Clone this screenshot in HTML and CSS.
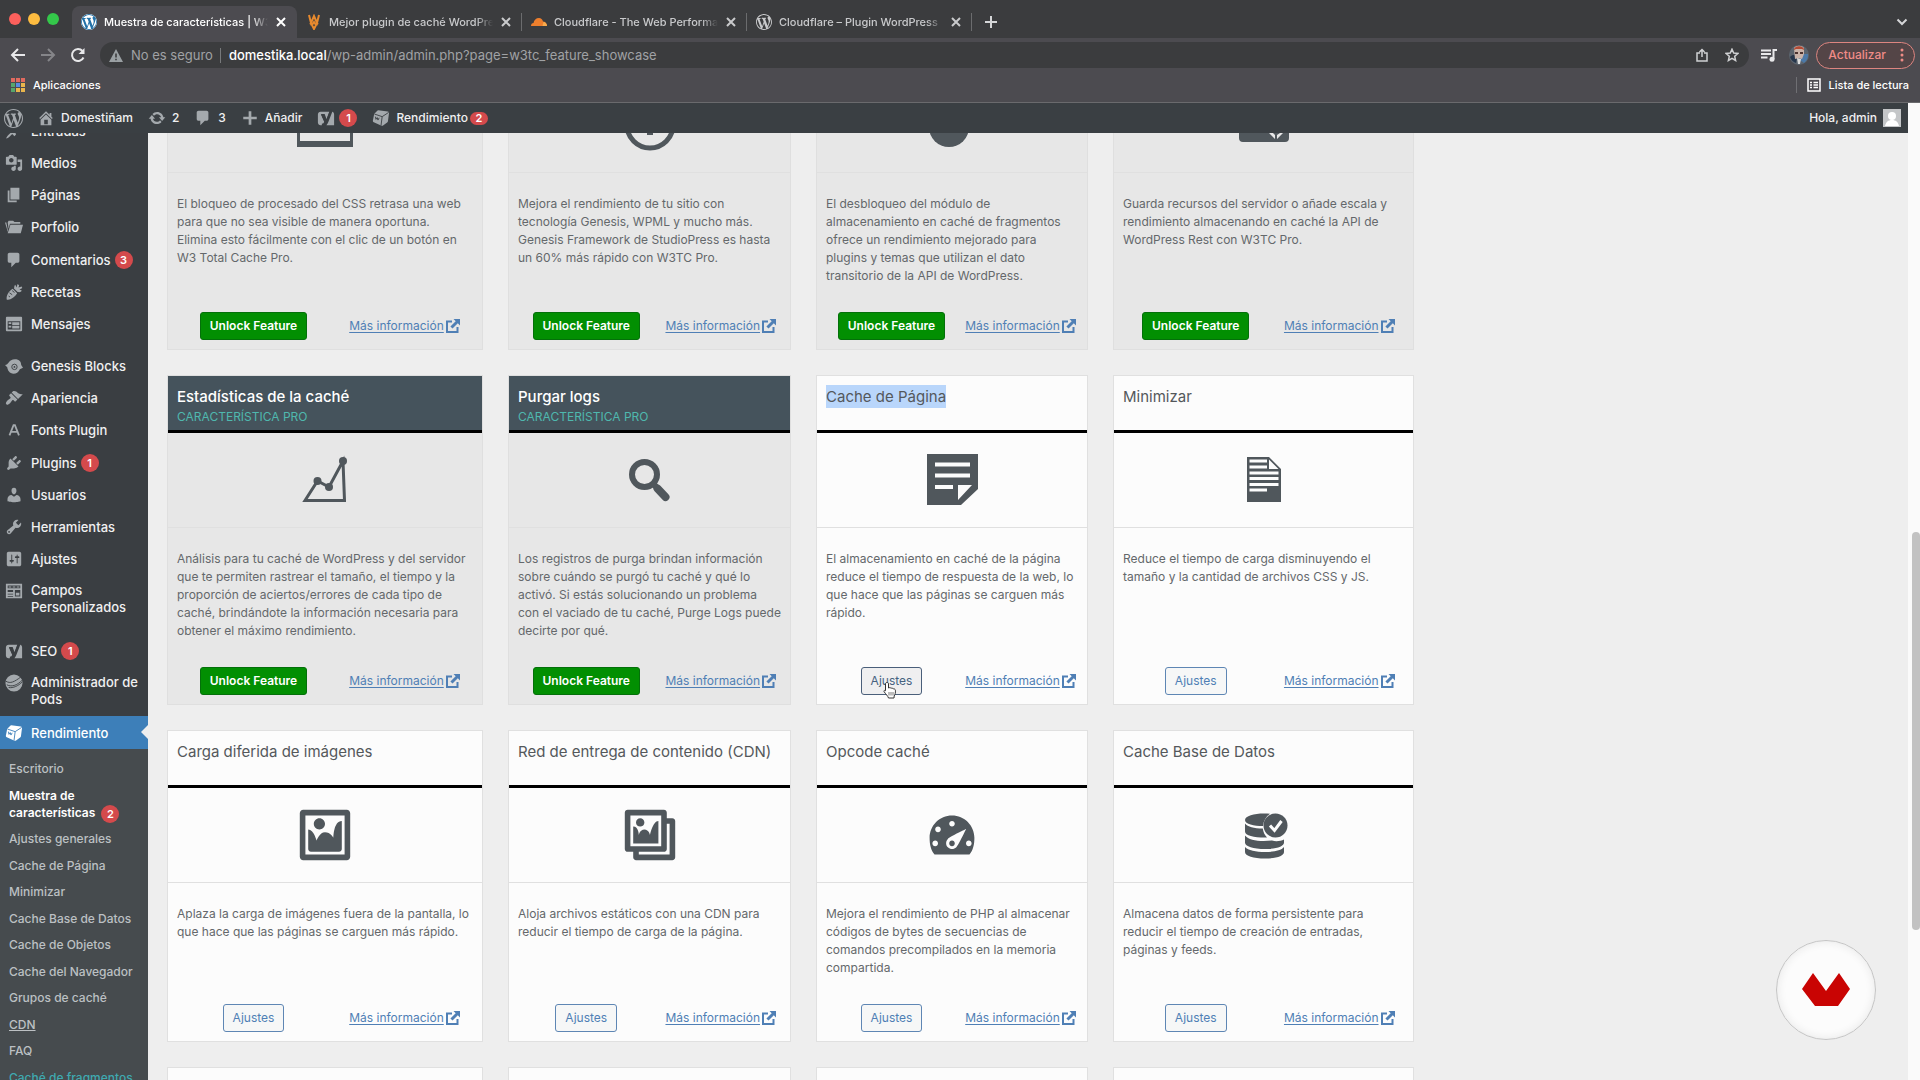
FILE: index.html
```html
<!DOCTYPE html>
<html lang="es">
<head>
<meta charset="utf-8">
<title>Muestra de características | W3 Total Cache</title>
<link rel="stylesheet" href="styles.css">
</head>
<body>
<svg class="sprite" aria-hidden="true">
  <symbol id="i-wp" viewBox="0 0 20 20"><path d="M20 10c0-5.51-4.49-10-10-10C4.48 0 0 4.49 0 10c0 5.52 4.48 10 10 10 5.51 0 10-4.48 10-10zM7.78 15.37L4.37 6.22c.55-.02 1.17-.08 1.17-.08.5-.06.44-1.13-.06-1.11 0 0-1.45.11-2.37.11-.18 0-.37 0-.58-.01C4.12 2.69 6.87 1.11 10 1.11c2.33 0 4.45.87 6.05 2.34-.68-.11-1.65.39-1.65 1.58 0 .74.45 1.36.9 2.1.35.61.55 1.36.55 2.46 0 1.49-1.4 5-1.4 5l-3.03-8.37c.54-.02.82-.17.82-.17.5-.05.44-1.25-.06-1.22 0 0-1.44.12-2.38.12-.87 0-2.33-.12-2.33-.12-.5-.03-.56 1.2-.06 1.22l.92.08 1.26 3.41zM17.41 10c.24-.64.74-1.87.43-4.25.7 1.29 1.05 2.71 1.05 4.25 0 3.29-1.73 6.24-4.4 7.78.97-2.59 1.94-5.2 2.92-7.78zM6.1 18.09C3.12 16.65 1.11 13.53 1.11 10c0-1.3.23-2.48.72-3.59C3.25 10.3 4.67 14.2 6.1 18.09zm4.03-6.63l2.58 6.98c-.86.29-1.76.45-2.71.45-.79 0-1.57-.11-2.29-.33.81-2.38 1.62-4.74 2.42-7.1z"/></symbol>
  <symbol id="i-home" viewBox="0 0 20 20"><path d="M16 8.5l1.53 1.53-1.06 1.06L10 4.6l-6.47 6.49-1.06-1.06L10 2.5l4 4v-2h2v4zm-6-2.46l6 5.99V18H4v-5.97zM12 17v-5H8v5h4z"/></symbol>
  <symbol id="i-update" viewBox="0 0 20 20"><path d="M10.2 3.28c3.53 0 6.43 2.61 6.92 6h2.08l-3.5 4-3.5-4h2.32c-.45-1.97-2.21-3.45-4.32-3.45-1.45 0-2.73.71-3.54 1.78L4.95 5.66C6.23 4.2 8.11 3.28 10.2 3.28zm-.4 13.44c-3.52 0-6.43-2.61-6.92-6H.8l3.5-4c1.17 1.33 2.33 2.67 3.5 4H5.48c.45 1.97 2.21 3.45 4.32 3.45 1.45 0 2.73-.71 3.54-1.78l1.71 1.95c-1.28 1.46-3.15 2.38-5.25 2.38z"/></symbol>
  <symbol id="i-comment" viewBox="0 0 20 20"><path d="M5 2h9c1.1 0 2 .9 2 2v7c0 1.1-.9 2-2 2h-2l-5 5v-5H5c-1.1 0-2-.9-2-2V4c0-1.1.9-2 2-2z"/></symbol>
  <symbol id="i-plus" viewBox="0 0 20 20"><path d="M8.5 2.500h3v6h6v3h-6v6h-3v-6h-6v-3h6z"/></symbol>
  <symbol id="i-yoast" viewBox="0 0 20 20"><path fill-rule="evenodd" d="M4 3h10l-3.300 8.500L8.500 5.500H4.300L8 14.300c-.4 1.500-1.200 2-2.600 2.100V18H4c-1.700 0-3-1.300-3-3V6c0-1.700 1.300-3 3-3zM17 3c1.200.3 2 1.500 2 3v12h-8.500c1-1.200 1.700-2.400 2.200-3.800z"/><path d="M5.500 6.500L9 14M15.500 0L10.300 14c-.9 2.700-2 4.200-4 4.500" fill="none" stroke="#3a3e42" stroke-width="1.500"/></symbol>
  <symbol id="i-cube" viewBox="0 0 20 20"><path d="M7 1.500l10.500 1.200c1 .1 1.500.8 1.400 1.700l-1.200 9.200c-.1.600-.4 1-.9 1.300l-4.500 3.400c-.5.400-1.100.5-1.700.2L2 14.600c-.8-.4-1.200-1-1-1.900L2.300 6c.1-.5.400-.9.800-1.200l2.500-2.600c.4-.5.800-.7 1.400-.7z"/><path d="M2.700 5.600L11.300 8.500l7.200-4.700M11.300 8.500L10 18.500M3.800 8.500l.6 3 1.400-2 .8 2.800L8 9.800" fill="none" stroke="var(--cube-line)" stroke-width="1"/></symbol>
  <symbol id="i-media" viewBox="0 0 20 20"><path d="M13 11V4c0-.55-.45-1-1-1h-1.670L9 1H5L3.670 3H2c-.55 0-1 .45-1 1v7c0 .55.45 1 1 1h10c.55 0 1-.45 1-1zM7 4.500c1.380 0 2.500 1.120 2.500 2.500S8.380 9.500 7 9.500 4.500 8.380 4.500 7 5.620 4.500 7 4.500zM14 6h5v10.500c0 1.380-1.120 2.500-2.500 2.500S14 17.880 14 16.500s1.120-2.500 2.500-2.500c.17 0 .34.02.5.05V9h-3V6zm-4 8.050V13h2v3.500c0 1.380-1.120 2.500-2.500 2.500S7 17.880 7 16.500 8.120 14 9.500 14c.17 0 .34.02.5.05z"/></symbol>
  <symbol id="i-page" viewBox="0 0 20 20"><path d="M6 15V2h10v13H6zm-1 1h8v2H3V5h2v11z"/></symbol>
  <symbol id="i-folder" viewBox="0 0 20 20"><path d="M0 5h1.500l2 10H3zM3 5l1-2h5l1.500 1.500H17V6.500H5.500L4 12z"/><path d="M6 7.500h14L17.500 17H3z"/></symbol>
  <symbol id="i-carrot" viewBox="0 0 20 20"><path d="M2 18.500C1 15 4 9 8.500 6.500l5 5C11 16 5.500 19.500 2 18.500zM10 6c.5-1 0-3 1.500-4l1.200 3L14 1l1.700 1.500L15 5l3.500-1 .7 1.500L16 7.500l2.500.5-.5 1.500c-1.500 1-3 .7-4 .5z"/><path d="M5 11l3 2M8 8.500l2.500 2M4 14.500l1.500 1" stroke="#3a3e42" stroke-width="1" fill="none"/></symbol>
  <symbol id="i-feedback" viewBox="0 0 20 20"><path d="M2 2h16c.55 0 1 .45 1 1v14c0 .55-.45 1-1 1H2c-.55 0-1-.45-1-1V3c0-.55.45-1 1-1zm15 14V7H3v9h14zM4 8v2h3V8H4zm4 0v3h8V8H8zm-4 4v2h3v-2H4zm4 0v3h8v-3H8z"/></symbol>
  <symbol id="i-genesis" viewBox="0 0 20 20"><path d="M0 9c4 0 4-6.500 11-6.500 5 0 7 3 7 6.500l2 3-3.500 1.500C15 17 12.500 18.500 9.500 18.500 5 18.500 3 15 2.500 11.500z"/><circle cx="10.500" cy="11" r="3" fill="none" stroke="#3a3e42" stroke-width="1"/><circle cx="10.500" cy="11" r="1" fill="#3a3e42"/></symbol>
  <symbol id="i-brush" viewBox="0 0 20 20"><path d="M14.480 11.060L7.410 3.990l1.500-1.500c.5-.56 2.300-.47 3.510.32 1.210.8 1.430 1.280 2.910 2.100 1.180.64 2.450 1.260 4.450.85zm-.71.71L6.700 4.700 4.930 6.470c-.39.39-.39 1.020 0 1.410l1.060 1.060c.39.39.39 1.030 0 1.420-.6.6-1.430 1.110-2.210 1.690-.35.26-.7.53-1.010.84C1.430 14.230.4 16.080 1.400 17.070c.99 1 2.840-.03 4.180-1.360.31-.31.58-.66.85-1.020.57-.78 1.080-1.610 1.690-2.210.39-.39 1.020-.39 1.410 0l1.060 1.060c.39.39 1.020.39 1.410 0z"/></symbol>
  <symbol id="i-fonts" viewBox="0 0 20 20"><path d="M5 16L9.500 4.500h1.500L15.500 16M6.800 12h7" fill="none" stroke="currentColor" stroke-width="2"/></symbol>
  <symbol id="i-plug" viewBox="0 0 20 20"><path d="M13.110 4.360L9.870 7.600 8 5.730l3.240-3.240c.35-.34 1.050-.2 1.560.32.52.51.66 1.210.31 1.550zm-8 1.770l.91-1.120 9.010 9.010-1.190.84c-.71.71-2.630 1.160-3.820 1.160H6.140L4.900 17.260c-.59.59-1.540.59-2.120 0-.59-.58-.59-1.530 0-2.120l1.240-1.240v-3.880c0-1.130.4-3.190 1.090-3.890zm7.260 3.970l3.240-3.240c.34-.35 1.040-.21 1.550.31.52.51.66 1.210.31 1.550l-3.240 3.250z"/></symbol>
  <symbol id="i-user" viewBox="0 0 20 20"><path d="M10 9.250c-2.270 0-2.730-3.440-2.730-3.440C7 4.020 7.820 2 9.970 2c2.160 0 2.980 2.020 2.710 3.810 0 0-.41 3.440-2.680 3.440zm0 2.570L12.720 10c2.390 0 4.520 2.330 4.520 4.530v2.490s-3.650 1.130-7.240 1.130c-3.650 0-7.240-1.130-7.240-1.130v-2.490c0-2.250 1.940-4.480 4.470-4.480z"/></symbol>
  <symbol id="i-wrench" viewBox="0 0 20 20"><path d="M16.680 9.770c-1.340 1.340-3.300 1.670-4.950.99l-5.410 6.520c-.99.99-2.590.99-3.580 0s-.99-2.590 0-3.570l6.520-5.420c-.68-1.650-.35-3.610.99-4.950 1.280-1.280 3.120-1.620 4.720-1.060l-2.890 2.890 2.820 2.820 2.860-2.870c.53 1.580.18 3.390-1.080 4.650zM3.810 16.210c.4.39 1.040.39 1.430 0 .4-.4.4-1.040 0-1.430-.39-.4-1.030-.4-1.430 0-.39.39-.39 1.030 0 1.430z"/></symbol>
  <symbol id="i-settings" viewBox="0 0 20 20"><path d="M18 16V4c0-1.100-.9-2-2-2H4c-1.100 0-2 .9-2 2v12c0 1.100.9 2 2 2h12c1.100 0 2-.9 2-2zM8 11h1c.55 0 1 .45 1 1s-.45 1-1 1H8v1.500c0 .28-.22.5-.5.5s-.5-.22-.5-.5V13H6c-.55 0-1-.45-1-1s.45-1 1-1h1V5.500c0-.28.22-.5.5-.5s.5.22.5.5V11zm5-2h-1c-.55 0-1-.45-1-1s.45-1 1-1h1V5.500c0-.28.22-.5.5-.5s.5.22.5.5V7h1c.55 0 1 .45 1 1s-.45 1-1 1h-1v5.500c0 .28-.22.5-.5.5s-.5-.22-.5-.5V9z"/></symbol>
  <symbol id="i-fields" viewBox="0 0 20 20"><path fill-rule="evenodd" d="M1 2h18v16H1zM3 4v3h14V4zM3 9v2h6V9zM3 13v1h6v-1zM3 15.500v1h6v-1zM11 9v7h6V9z"/><path d="M4 5h3v1H4zM8.500 5h3v1h-3zM13 5h3v1h-3zM12 12h4v3h-4z"/></symbol>
  <symbol id="i-pods" viewBox="0 0 20 20"><circle cx="10" cy="10" r="9.500"/><path d="M1 8c5 3 9 1 17-5M2 12c6 3 12 0 17-5M4 15c5 1 11-2 15-6" fill="none" stroke="#3a3e42" stroke-width="1"/></symbol>
  <symbol id="i-pin" viewBox="0 0 20 20"><path d="M10.440 3.020l1.820-1.820 6.360 6.350-1.830 1.820c-1.050-.68-2.480-.57-3.410.36l-.75.75c-.92.93-1.040 2.350-.35 3.410l-1.830 1.820-2.410-2.410-2.800 2.790c-.42.42-3.380 2.710-3.800 2.290s1.860-3.390 2.280-3.810l2.790-2.790L4.100 9.360l1.830-1.820c1.050.69 2.480.57 3.400-.36l.75-.75c.93-.92 1.050-2.350.36-3.410z"/></symbol>
  <symbol id="i-x" viewBox="0 0 12 12"><path d="M2 2l8 8M10 2l-8 8" fill="none" stroke="currentColor" stroke-width="2"/></symbol>
  <symbol id="i-ext" viewBox="0 0 14 14"><path d="M6 2.500H1v10.500h10.500V8" fill="none" stroke="currentColor" stroke-width="2"/><path d="M7.500 0H14v6.500l-2.200-2.200L6.500 9.600 4.400 7.500l5.300-5.300z"/></symbol>

  <symbol id="a-chart" viewBox="0 0 60 60"><path d="M10 50.500L22.500 31 34 37 48 11l1.500 39.500z" fill="none" stroke="currentColor" stroke-width="3"/><circle cx="22.500" cy="31" r="4"/><circle cx="34" cy="37" r="4"/><circle cx="48" cy="11" r="4"/></symbol>
  <symbol id="a-search" viewBox="0 0 60 60"><circle cx="24.500" cy="24.500" r="12.500" fill="none" stroke="currentColor" stroke-width="6"/><path d="M33.500 34l12 13" stroke="currentColor" stroke-width="6" stroke-linecap="round"/><path d="M37.500 38.500l8 8.500" stroke="currentColor" stroke-width="8" stroke-linecap="round"/></symbol>
  <symbol id="a-note" viewBox="0 0 60 60"><path fill-rule="evenodd" d="M5 4h51v35L39 55H5zM13 12.500v4h35v-4zM13 23.500v4h35v-4zM13 35v4h18v-4zM36 35v15l14-15z"/></symbol>
  <symbol id="a-doc" viewBox="0 0 60 60"><path fill-rule="evenodd" d="M13 7h22l12 12v33H13zM15.500 9.500v3H33v-3zM15.500 15.500v3H33v-3zM35 9.500v9.500h9.500zM15.500 21.500v3h29v-3zM15.500 27v3h29v-3zM15.500 33v3h29v-3zM15.500 38.500v3H33v-3z"/></symbol>
  <symbol id="a-image" viewBox="0 0 20 20"><path d="M2.250 1h15.500c.69 0 1.250.56 1.250 1.250v15.500c0 .69-.56 1.250-1.250 1.250H2.250C1.560 19 1 18.440 1 17.750V2.250C1 1.560 1.560 1 2.250 1zM17 17V3H3v14h14zM10 6c0-1.100-.9-2-2-2s-2 .9-2 2 .9 2 2 2 2-.9 2-2zm3 5s0-6 3-6v10c0 .55-.45 1-1 1H5c-.55 0-1-.45-1-1V8c2 0 3 4 3 4s1-3 3-3 3 2 3 2z"/></symbol>
  <symbol id="a-gallery" viewBox="0 0 20 20"><path d="M16 4h1.960c.57 0 1.040.47 1.040 1.040v12.920c0 .57-.47 1.040-1.040 1.040H5.040C4.470 19 4 18.530 4 17.960V16H2.040C1.470 16 1 15.530 1 14.960V2.040C1 1.470 1.470 1 2.040 1h12.920c.57 0 1.040.47 1.040 1.040V4zM3 14h11V3H3v11zm5-8.500C8 4.670 7.330 4 6.500 4S5 4.670 5 5.500 5.670 7 6.500 7 8 6.330 8 5.500zm2 4.500s1-5 3-5v8H4V7c2 0 2 3 2 3s.33-2 2-2 2 2 2 2zm7 7V6h-1v8.960c0 .57-.47 1.040-1.040 1.040H6v1h11z"/></symbol>
  <symbol id="a-gauge" viewBox="0 0 20 20"><path d="M3.760 17h12.480c1.340-1.630 1.760-3.730 1.760-6 0-4.420-3.580-8-8-8s-8 3.580-8 8c0 2.270.42 4.370 1.760 6zM9 6c0-.55.45-1 1-1s1 .45 1 1c0 .56-.45 1-1 1s-1-.44-1-1zM4 8c0-.55.45-1 1-1s1 .45 1 1c0 .56-.45 1-1 1s-1-.44-1-1zm4.520 3.400c.84-.83 6.510-3.500 6.510-3.500s-2.660 5.680-3.490 6.510c-.84.84-2.180.84-3.020 0-.83-.83-.83-2.180 0-3.010zM3 13c0-.55.45-1 1-1s1 .45 1 1c0 .56-.45 1-1 1s-1-.44-1-1zm6 0c0-.55.45-1 1-1s1 .45 1 1-.45 1-1 1-1-.44-1-1zm6 0c0-.55.45-1 1-1s1 .45 1 1c0 .56-.45 1-1 1s-1-.44-1-1z"/></symbol>
  <symbol id="a-database" viewBox="0 0 60 60"><path d="M30 8.500c-10 0-19 2.500-19 6.500s9 6 18 6c.5-5 3-9.500 7-12.200-2-.2-4-.3-6-.3z"/><path d="M11 18.500v8c0 4 9 6 20 6h2c-2.300-2.500-3.800-5.400-4.200-9-9 0-15-1.800-17.800-5zM11 30.500v7c0 4 8.500 6.500 20 6.500s19-2.500 19-6.500v-3c-3 1.500-8 2.300-12 1-12 1.300-23 0-27-5zM11 42v5c0 4 8.500 6.500 20 6.500S50 51 50 47v-5c-3 3.500-10 5-19 5s-17-1.500-20-5z"/><circle cx="41.500" cy="20.500" r="12"/><path d="M36 20.500l4.500 5 7-9.500" fill="none" stroke="#fcfcfc" stroke-width="3"/></symbol>
</svg>

<header class="browser">
  <div class="tabstrip">
    <div class="lights"><i class="light light--red"></i><i class="light light--yellow"></i><i class="light light--green"></i></div>
    <div class="tabs">
      <div class="tab tab--active"><svg class="tab__icon tab__icon--blue"><use href="#i-wp"/></svg><span class="tab__title">Muestra de características | W3</span><button class="tab__close" aria-label="Cerrar"><svg class="x"><use href="#i-x"/></svg></button></div>
      <div class="tab"><svg class="tab__icon" viewBox="0 0 16 16"><path d="M3 1l2 8 3-7 3 7 2-8M4 9l2 2 2-3 2 3 2-2M6 11l2 4 2-4" fill="none" stroke="#e88a2e" stroke-width="2"/></svg><span class="tab__title">Mejor plugin de caché WordPress</span><button class="tab__close" aria-label="Cerrar"><svg class="x"><use href="#i-x"/></svg></button></div>
      <div class="tab"><svg class="tab__icon" viewBox="0 0 16 16"><path d="M0 12c0-2 1-3 2.500-3C3 6 5 4 8 4c2 0 3.500 1.500 4 3.500 2 0 4 2 4 4.500z" fill="#ee7f2d"/><path d="M11.500 12l1-4c2 0 3.500 2 3.500 4z" fill="#f8ab4d"/></svg><span class="tab__title">Cloudflare - The Web Performance</span><button class="tab__close" aria-label="Cerrar"><svg class="x"><use href="#i-x"/></svg></button></div>
      <div class="tab"><svg class="tab__icon"><use href="#i-wp"/></svg><span class="tab__title">Cloudflare – Plugin WordPress</span><button class="tab__close" aria-label="Cerrar"><svg class="x"><use href="#i-x"/></svg></button></div>
    </div>
    <button class="newtab" aria-label="Nueva pestaña"><svg width="14" height="14" viewBox="0 0 14 14"><path d="M7 1v12M1 7h12" fill="none" stroke="currentColor" stroke-width="2"/></svg></button>
    <button class="tabmenu" aria-label="Buscar pestañas"><svg width="12" height="8" viewBox="0 0 12 8"><path d="M1.500 1.500L6 6l4.500-4.500" fill="none" stroke="currentColor" stroke-width="2"/></svg></button>
  </div>
  <div class="toolbar">
    <button class="nav" aria-label="Atrás"><svg width="16" height="16" viewBox="0 0 16 16"><path d="M15 8H2M8 2L2 8l6 6" fill="none" stroke="currentColor" stroke-width="2"/></svg></button>
    <button class="nav nav--off" aria-label="Adelante"><svg width="16" height="16" viewBox="0 0 16 16"><path d="M1 8h13M8 2l6 6-6 6" fill="none" stroke="currentColor" stroke-width="2"/></svg></button>
    <button class="nav" aria-label="Recargar"><svg width="16" height="16" viewBox="0 0 16 16"><path d="M13.500 10.500A6 6 0 1 1 12.500 4" fill="none" stroke="currentColor" stroke-width="2"/><path d="M14.500 1v6h-6z" fill="currentColor"/></svg></button>
    <div class="address">
      <svg width="14" height="13" viewBox="0 0 14 13"><path fill-rule="evenodd" fill="#9aa0a3" d="M7 0l7 13H0zM6.200 4.500v4h1.600v-4zM6.200 9.700v1.600h1.600V9.700z"/></svg>
      <span class="address__warn">No es seguro</span>
      <span class="address__url"><b class="address__host">domestika.local</b>/wp-admin/admin.php?page=w3tc_feature_showcase</span>
      <button class="address__btn" aria-label="Compartir"><svg width="12" height="14" viewBox="0 0 12 14"><path d="M4 5H1v8h10V5H8M6 9V1.500M3.500 4L6 1.500 8.500 4" fill="none" stroke="currentColor" stroke-width="1.500"/></svg></button>
      <button class="address__btn" aria-label="Favorito"><svg width="14" height="14" viewBox="0 0 14 14"><path d="M7 1.200l1.700 3.900 4.200.4-3.200 2.800.9 4.200L7 10.300l-3.600 2.200.9-4.200L1.100 5.500l4.200-.4z" fill="none" stroke="currentColor" stroke-width="1.500"/></svg></button>
    </div>
    <button class="ext" aria-label="Reproducción"><svg width="16" height="13" viewBox="0 0 16 13"><path d="M0 1.500h10M0 5h10M0 8.500h6.500M12.500 10V1h3.500" fill="none" stroke="currentColor" stroke-width="2"/><circle cx="11" cy="10.300" r="2.500" fill="currentColor"/></svg></button>
    <svg class="profile" viewBox="0 0 20 20"><circle cx="10" cy="10" r="10" fill="#5b646e"/><path d="M12 9h7a10 10 0 0 1-4 9l-4-3z" fill="#4b79a8"/><path d="M1 12c3-3 5-2 7 0l-1 6c-3-1-5-3-6-6z" fill="#26364c"/><path d="M5 3c2-3 8-3 10 0v6l-2 5-3-1-4 1z" fill="#c9b3a9"/><path d="M5 5c0-5 10-5 10 0l-2-1H7z" fill="#b34a35"/><path d="M6 7h3v2H6zM11 7h3v2h-3z" fill="#4c3330"/><path d="M8 13l4 1-1 5H9z" fill="#ddd"/></svg>
    <button class="updatebtn">Actualizar<svg width="4" height="14" viewBox="0 0 4 14"><circle cx="2" cy="2" r="1.500"/><circle cx="2" cy="7" r="1.500"/><circle cx="2" cy="12" r="1.500"/></svg></button>
  </div>
  <div class="bookmarks">
    <a class="bookmark" href="#"><svg width="14" height="14" viewBox="0 0 14 14"><path d="M0 0h4v4H0zM5 0h4v4H5zM10 0h4v4h-4z" fill="#e06a5f"/><path d="M0 5h4v4H0zM0 10h4v4H0z" fill="#57a56b"/><path d="M5 5h4v4H5z" fill="#5a8be0"/><path d="M10 5h4v4h-4zM5 10h4v4H5zM10 10h4v4h-4z" fill="#e9b54c"/></svg>Aplicaciones</a>
    <a class="bookmark bookmark--list" href="#"><svg width="14" height="14" viewBox="0 0 14 14"><path d="M1 1h12v12H1zM3 4.500h2M6.500 4.500H11M3 7h2M6.500 7H11M3 9.500h2M6.500 9.500H11" fill="none" stroke="currentColor" stroke-width="1.500"/></svg>Lista de lectura</a>
  </div>
</header>

<div class="page">
  <div class="site">
    <nav class="adminbar">
      <a class="ab ab--logo" href="#" aria-label="WordPress"><svg class="ic ic--20"><use href="#i-wp"/></svg></a>
      <a class="ab" href="#"><svg class="ic"><use href="#i-home"/></svg>Domestiñam</a>
      <a class="ab" href="#"><svg class="ic"><use href="#i-update"/></svg>2</a>
      <a class="ab" href="#"><svg class="ic"><use href="#i-comment"/></svg>3</a>
      <a class="ab" href="#"><svg class="ic"><use href="#i-plus"/></svg>Añadir</a>
      <a class="ab" href="#"><svg class="ic"><use href="#i-yoast"/></svg><span class="badge">1</span></a>
      <a class="ab" href="#"><svg class="ic"><use href="#i-cube"/></svg>Rendimiento<span class="badge badge--flat">2</span></a>
      <a class="ab ab--user" href="#">Hola, admin<svg class="avatar" viewBox="0 0 18 18"><path d="M0 0h18v18H0z" fill="#c4c6c8"/><circle cx="9" cy="7" r="4" fill="#fff"/><path d="M2 17c1-4 3-6 7-6s6 2 7 6z" fill="#fff"/></svg></a>
    </nav>
    <div class="body">
      <aside class="sidebar">
        <ul class="menu">
          <li class="menu__cut"><a class="mi" href="#"><svg class="ic"><use href="#i-pin"/></svg>Entradas</a></li>
          <li><a class="mi" href="#"><svg class="ic"><use href="#i-media"/></svg>Medios</a></li>
          <li><a class="mi" href="#"><svg class="ic"><use href="#i-page"/></svg>Páginas</a></li>
          <li><a class="mi" href="#"><svg class="ic"><use href="#i-folder"/></svg>Porfolio</a></li>
          <li><a class="mi mi--badged" href="#"><svg class="ic"><use href="#i-comment"/></svg>Comentarios<span class="badge">3</span></a></li>
          <li><a class="mi" href="#"><svg class="ic"><use href="#i-carrot"/></svg>Recetas</a></li>
          <li><a class="mi" href="#"><svg class="ic"><use href="#i-feedback"/></svg>Mensajes</a></li>
          <li class="menu__group"><a class="mi" href="#"><svg class="ic"><use href="#i-genesis"/></svg>Genesis Blocks</a></li>
          <li><a class="mi" href="#"><svg class="ic"><use href="#i-brush"/></svg>Apariencia</a></li>
          <li><a class="mi" href="#"><svg class="ic"><use href="#i-fonts"/></svg>Fonts Plugin</a></li>
          <li><a class="mi mi--badged" href="#"><svg class="ic"><use href="#i-plug"/></svg>Plugins<span class="badge">1</span></a></li>
          <li><a class="mi" href="#"><svg class="ic"><use href="#i-user"/></svg>Usuarios</a></li>
          <li><a class="mi" href="#"><svg class="ic"><use href="#i-wrench"/></svg>Herramientas</a></li>
          <li><a class="mi" href="#"><svg class="ic"><use href="#i-settings"/></svg>Ajustes</a></li>
          <li><a class="mi mi--two" href="#"><svg class="ic"><use href="#i-fields"/></svg><span>Campos<br>Personalizados</span></a></li>
          <li class="menu__group"><a class="mi mi--badged" href="#"><svg class="ic"><use href="#i-yoast"/></svg>SEO<span class="badge">1</span></a></li>
          <li><a class="mi mi--two" href="#"><svg class="ic"><use href="#i-pods"/></svg><span>Administrador de<br>Pods</span></a></li>
          <li><a class="mi mi--current" href="#"><svg class="ic"><use href="#i-cube"/></svg>Rendimiento</a></li>
        </ul>
        <ul class="submenu">
          <li><a class="sub" href="#">Escritorio</a></li>
          <li><a class="sub sub--current" href="#">Muestra de<br>características<span class="badge">2</span></a></li>
          <li><a class="sub" href="#">Ajustes generales</a></li>
          <li><a class="sub" href="#">Cache de Página</a></li>
          <li><a class="sub" href="#">Minimizar</a></li>
          <li><a class="sub" href="#">Cache Base de Datos</a></li>
          <li><a class="sub" href="#">Cache de Objetos</a></li>
          <li><a class="sub" href="#">Cache del Navegador</a></li>
          <li><a class="sub" href="#">Grupos de caché</a></li>
          <li><a class="sub sub--underline" href="#">CDN</a></li>
          <li><a class="sub" href="#">FAQ</a></li>
          <li><a class="sub sub--pro" href="#">Caché de fragmentos</a></li>
        </ul>
      </aside>
      <main class="content">
        <div class="cards">
          <article class="card card--pro card--cut">
            <div class="art"><svg class="art__cut" viewBox="0 0 60 28"><path d="M2 0v14h56V0h-3v8H5V0z"/></svg></div>
            <p class="card__text">El bloqueo de procesado del CSS retrasa una web para que no sea visible de manera oportuna. Elimina&nbsp;esto fácilmente con el clic de un botón en W3&nbsp;Total Cache Pro.</p>
            <footer class="card__foot"><button class="btn btn--unlock">Unlock Feature</button><a class="more" href="#"><span>Más información</span><svg class="more__ic"><use href="#i-ext"/></svg></a></footer>
          </article>
          <article class="card card--pro card--cut">
            <div class="art"><svg class="art__cut" viewBox="0 0 60 28"><path d="M7 -8a23 23 0 0 0 46 0" fill="none" stroke="currentColor" stroke-width="5"/><path d="M27 -4h6v6h-6z"/></svg></div>
            <p class="card__text">Mejora el rendimiento de tu sitio con tecnología Genesis, WPML y mucho más. Genesis Framework de StudioPress es hasta un 60% más rápido con W3TC Pro.</p>
            <footer class="card__foot"><button class="btn btn--unlock">Unlock Feature</button><a class="more" href="#"><span>Más información</span><svg class="more__ic"><use href="#i-ext"/></svg></a></footer>
          </article>
          <article class="card card--pro card--cut">
            <div class="art"><svg class="art__cut" viewBox="0 0 60 28"><circle cx="27" cy="-6" r="20"/></svg></div>
            <p class="card__text">El desbloqueo del módulo de almacenamiento en caché de fragmentos ofrece un rendimiento mejorado para plugins y temas que utilizan el dato transitorio de la API de WordPress.</p>
            <footer class="card__foot"><button class="btn btn--unlock">Unlock Feature</button><a class="more" href="#"><span>Más información</span><svg class="more__ic"><use href="#i-ext"/></svg></a></footer>
          </article>
          <article class="card card--pro card--cut">
            <div class="art"><svg class="art__cut" viewBox="0 0 60 28"><path fill-rule="evenodd" d="M5 0h50v5a4 4 0 0 1-4 4H9a4 4 0 0 1-4-4zM35 0l6 6V2l-2-2zM43 6l6-6h-3l-3 2z"/></svg></div>
            <p class="card__text">Guarda recursos del servidor o añade escala y rendimiento almacenando en caché la API de WordPress Rest con W3TC Pro.</p>
            <footer class="card__foot"><button class="btn btn--unlock">Unlock Feature</button><a class="more" href="#"><span>Más información</span><svg class="more__ic"><use href="#i-ext"/></svg></a></footer>
          </article>

          <article class="card card--pro">
            <header class="card__head"><h3 class="card__title">Estadísticas de la caché</h3><p class="card__tag">CARACTERÍSTICA PRO</p></header>
            <div class="art"><svg class="art__ic"><use href="#a-chart"/></svg></div>
            <p class="card__text">Análisis para tu caché de WordPress y del servidor que te permiten rastrear el tamaño, el tiempo y la proporción de aciertos/errores de cada tipo de caché, brindándote la información necesaria para obtener el máximo rendimiento.</p>
            <footer class="card__foot"><button class="btn btn--unlock">Unlock Feature</button><a class="more" href="#"><span>Más información</span><svg class="more__ic"><use href="#i-ext"/></svg></a></footer>
          </article>
          <article class="card card--pro">
            <header class="card__head"><h3 class="card__title">Purgar logs</h3><p class="card__tag">CARACTERÍSTICA PRO</p></header>
            <div class="art"><svg class="art__ic"><use href="#a-search"/></svg></div>
            <p class="card__text">Los registros de purga brindan información sobre cuándo se purgó tu caché y qué lo activó. Si estás solucionando un problema con&nbsp;el vaciado de tu caché, Purge Logs puede decirte por qué.</p>
            <footer class="card__foot"><button class="btn btn--unlock">Unlock Feature</button><a class="more" href="#"><span>Más información</span><svg class="more__ic"><use href="#i-ext"/></svg></a></footer>
          </article>
          <article class="card">
            <header class="card__head"><h3 class="card__title"><mark class="selected">Cache de Página</mark></h3></header>
            <div class="art"><svg class="art__ic"><use href="#a-note"/></svg></div>
            <p class="card__text">El almacenamiento en caché de la página reduce el tiempo de respuesta de la web, lo que hace que las páginas se carguen más rápido.</p>
            <footer class="card__foot"><button class="btn btn--hover">Ajustes<svg class="cursor" viewBox="0 0 14 18"><path d="M4 1.500c1 0 1.500.5 1.500 1.500v4c1-.6 2-.4 2.500.3.900-.4 1.800-.1 2.200.6 1-.3 2 .2 2.200 1.300.2 2.500-.2 4-1.200 5.800L11 17H5.500c-.5-2-3-4-4.500-6.500-.3-1 .8-1.500 1.500-.8V3c0-1 .5-1.500 1.500-1.500z" fill="#fff" stroke="#333" stroke-width="1"/><path d="M6 11v3.500M8 11v3.500M10 11v3.500" stroke="#777" stroke-width="1"/></svg></button><a class="more" href="#"><span>Más información</span><svg class="more__ic"><use href="#i-ext"/></svg></a></footer>
          </article>
          <article class="card">
            <header class="card__head"><h3 class="card__title">Minimizar</h3></header>
            <div class="art"><svg class="art__ic"><use href="#a-doc"/></svg></div>
            <p class="card__text">Reduce el tiempo de carga disminuyendo el tamaño y la cantidad de archivos CSS y JS.</p>
            <footer class="card__foot"><button class="btn">Ajustes</button><a class="more" href="#"><span>Más información</span><svg class="more__ic"><use href="#i-ext"/></svg></a></footer>
          </article>

          <article class="card">
            <header class="card__head"><h3 class="card__title">Carga diferida de imágenes</h3></header>
            <div class="art"><svg class="art__ic art__ic--dash"><use href="#a-image"/></svg></div>
            <p class="card__text">Aplaza la carga de imágenes fuera de la pantalla, lo que hace que las páginas se carguen más rápido.</p>
            <footer class="card__foot"><button class="btn">Ajustes</button><a class="more" href="#"><span>Más información</span><svg class="more__ic"><use href="#i-ext"/></svg></a></footer>
          </article>
          <article class="card">
            <header class="card__head"><h3 class="card__title">Red de entrega de contenido (CDN)</h3></header>
            <div class="art"><svg class="art__ic art__ic--dash"><use href="#a-gallery"/></svg></div>
            <p class="card__text">Aloja archivos estáticos con una CDN para reducir el tiempo de carga de la página.</p>
            <footer class="card__foot"><button class="btn">Ajustes</button><a class="more" href="#"><span>Más información</span><svg class="more__ic"><use href="#i-ext"/></svg></a></footer>
          </article>
          <article class="card">
            <header class="card__head"><h3 class="card__title">Opcode caché</h3></header>
            <div class="art"><svg class="art__ic art__ic--dash"><use href="#a-gauge"/></svg></div>
            <p class="card__text">Mejora el rendimiento de PHP al almacenar códigos de bytes de secuencias de comandos precompilados en la memoria compartida.</p>
            <footer class="card__foot"><button class="btn">Ajustes</button><a class="more" href="#"><span>Más información</span><svg class="more__ic"><use href="#i-ext"/></svg></a></footer>
          </article>
          <article class="card">
            <header class="card__head"><h3 class="card__title">Cache Base de Datos</h3></header>
            <div class="art"><svg class="art__ic"><use href="#a-database"/></svg></div>
            <p class="card__text">Almacena datos de forma persistente para reducir el tiempo de creación de entradas, páginas y feeds.</p>
            <footer class="card__foot"><button class="btn">Ajustes</button><a class="more" href="#"><span>Más información</span><svg class="more__ic"><use href="#i-ext"/></svg></a></footer>
          </article>

          <article class="card card--stub"></article>
          <article class="card card--stub"></article>
          <article class="card card--stub"></article>
          <article class="card card--stub"></article>
        </div>
      </main>
    </div>
  </div>
  <div class="scroll"><div class="scroll__thumb"></div></div>
</div>
<div class="brand"><svg width="48" height="34" viewBox="0 0 48 34"><path d="M11 0l13 18L37 0l11 16-12 17H13L0 16z" fill="#c90403"/></svg></div>
</body>
</html>
```

FILE: styles.css
```css
* { box-sizing: border-box; }
body {
  margin: 0;
  height: 100vh;
  overflow: hidden;
  display: flex;
  flex-direction: column;
  background: #eeeeee;
  color: #64686b;
  font: 12px/18px Inter, "Liberation Sans", sans-serif;
}
ul, h3, p { margin: 0; padding: 0; list-style: none; }
a { color: inherit; text-decoration: none; }
button { margin: 0; padding: 0; border: 0; background: none; color: inherit; font: inherit; }
svg { display: block; flex: none; fill: currentColor; }
.sprite { display: none; }

/* Browser window */
.browser { flex: none; background: #4c4b50; color: #e8e8ea; font-size: 11px; font-weight: 500; border-bottom: 1px solid #6a6a6d; }
.tabstrip { display: flex; align-items: center; height: 38px; background: #3b3c3e; }
.lights { display: flex; gap: 7px; padding-left: 9px; width: 72px; }
.light { width: 12px; height: 12px; border-radius: 6px; }
.light--red { background: #fc605c; }
.light--yellow { background: #fdbc40; }
.light--green { background: #34c84a; }
.tabs { display: flex; align-self: flex-end; }
.tab { display: flex; align-items: center; width: 225px; height: 32px; padding: 0 10px 0 9px; color: #c9cacc; position: relative; }
.tab::after { content: ""; position: absolute; right: 0; top: 7px; height: 18px; width: 1px; background: #6b6c6e; }
.tab--active { background: #4c4b50; color: #fff; border-radius: 8px 8px 0 0; }
.tab--active::after { display: none; }
.tab__icon { width: 16px; height: 16px; margin-right: 7px; }
.tab__icon--blue { color: #2271a8; background: #fff; border-radius: 8px; }
.tab__title { flex: 1; overflow: hidden; white-space: nowrap; -webkit-mask-image: linear-gradient(90deg, #000 90%, transparent); mask-image: linear-gradient(90deg, #000 90%, transparent); }
.tab__close { margin-left: 7px; }
.x { width: 12px; height: 12px; }
.newtab { margin: 6px 0 0 12px; color: #d5d6d8; }
.tabmenu { margin: 6px 12px 0 auto; color: #d5d6d8; }
.toolbar { display: flex; align-items: center; height: 34px; padding: 0 5px 0 10px; }
.nav { margin-right: 14px; }
.nav--off { color: #858589; }
.address { flex: 1; display: flex; align-items: center; height: 26px; padding: 0 10px 0 9px; border-radius: 13px; background: #3b3c3e; color: #a0a2a5; font-size: 13px; font-weight: 400; }
.address__warn { margin: 0 8px; padding-right: 7px; border-right: 1px solid #77797b; line-height: 15px; }
.address__url { flex: 1; }
.address__host { color: #fff; font-weight: 500; }
.address__btn { margin-left: 17px; color: #d0d1d3; }
.ext { margin-left: 12px; }
.profile { width: 20px; height: 20px; margin: 0 7px 0 12px; }
.updatebtn { display: flex; align-items: center; gap: 14px; height: 27px; padding: 0 10px 0 11px; border: 1px solid #dd8580; border-radius: 14px; color: #f08c87; background: #544547; font-size: 12px; }
.bookmarks { display: flex; justify-content: space-between; align-items: center; height: 30px; padding: 0 11px 4px; color: #fff; }
.bookmark { display: flex; align-items: center; gap: 8px; line-height: 16px; }
.bookmark--list { padding-left: 10px; border-left: 1px solid #6f6f73; }

/* Page frame */
.page { flex: 1; min-height: 0; display: flex; }
.site { flex: 1; min-width: 0; display: flex; flex-direction: column; }
.scroll { width: 12px; padding: 429px 0 0 4px; background: #fafafa; }
.scroll__thumb { height: 398px; border-radius: 4px; background: #c2c2c2; }

.ic { width: 18px; height: 18px; color: #a4a9ad; --cube-line: #3a3e42; }
.badge { display: inline-flex; align-items: center; justify-content: center; width: 18px; height: 18px; border-radius: 9px; background: #d44a4c; color: #fff; font-size: 11px; line-height: 18px; font-weight: 600; }

.adminbar { flex: none; display: flex; align-items: center; height: 30px; padding: 0 7px 0 4px; background: #3a3f43; color: #f0f0f1; font-size: 12px; font-weight: 500; }
.ab { display: flex; align-items: center; gap: 6px; margin-right: 15px; }
.ab .badge { margin-left: -2px; }
.ab .badge--flat { height: 13px; margin-left: -4px; }
.ab--logo { margin-right: 14px; }
.ic--20 { width: 19px; height: 19px; }
.ab--user { margin: 0 0 0 auto; }
.avatar { width: 18px; height: 18px; }

.body { flex: 1; min-height: 0; display: flex; overflow: hidden; }
.sidebar { flex: none; width: 148px; background: #3a3e42; color: #f0f0f1; font-size: 13px; font-weight: 500; }
.mi { display: flex; align-items: center; gap: 8px; height: 32px; padding-left: 5px; line-height: 18px; white-space: nowrap; }
.mi--badged { height: 33px; }
.mi .badge { margin-left: -4px; }
.mi--two { height: 49px; align-items: flex-start; padding-top: 7px; line-height: 17px; }
.mi--current { position: relative; height: 33px; background: #3d7fb9; color: #fff; }
.mi--current .ic { color: #fff; --cube-line: #3d7fb9; }
.mi--current::after { content: ""; position: absolute; right: 0; top: 9px; border: 7px solid transparent; border-left: 0; border-right-color: #eee; }
.menu__cut { display: flex; align-items: flex-end; height: 14px; overflow: hidden; }
.menu__group { margin-top: 10px; }
.submenu { padding: 7px 0; background: #464b4e; color: #bcc0c3; font-size: 12px; }
.sub { display: block; padding: 5px 9px; line-height: 16px; white-space: nowrap; }
.submenu li:nth-child(even) .sub { line-height: 17px; }
.sub--current { color: #fff; font-weight: 600; }
.sub--current .badge { margin: -2px 0 -2px 6px; vertical-align: middle; }
.sub--underline { text-decoration: underline; }
.sub--pro { color: #3fa9b0; }

/* Feature cards */
.content { flex: 1; min-width: 0; padding: 0 19px; }
.cards { display: grid; grid-template-columns: 316fr 283fr 272fr 301fr; gap: 25px; max-width: 1247px; }
.card { display: flex; flex-direction: column; min-width: 0; border: 1px solid #e0e0e0; background: #fcfcfc; }
.card--pro { background: #e7e7e7; border-color: #dfdfdf; }
.card--cut { border-top: 0; }
.card--stub { height: 60px; }
.card__head { height: 57px; padding: 9px 9px 0; border-bottom: 3px solid #000; }
.card--pro .card__head { background: #45535c; }
.card__title { font-size: 15px; line-height: 23px; font-weight: 400; color: #54585b; white-space: nowrap; }
.card--pro .card__title { color: #fff; font-weight: 500; }
.card__tag { color: #4fb8ae; font-size: 12px; line-height: 18px; }
.selected { display: inline-block; background: #b9d6fb; color: #54585b; }
.art { display: flex; align-items: center; justify-content: center; height: 95px; border-bottom: 1px solid #e0e0e0; color: #50575c; }
.card--cut .art { height: 40px; align-items: flex-start; }
.art__cut { width: 60px; height: 28px; overflow: hidden; }
.art__ic { width: 60px; height: 60px; }
.art__ic--dash { width: 56px; height: 56px; }
.card__text { flex: 1; padding: 22px 9px 27px; }
.card__foot { display: grid; grid-template-columns: 1fr 1fr; align-items: center; justify-items: center; margin: 0 2px 9px 10px; }
.btn { position: relative; height: 28px; padding: 0 9px; border: 1px solid #5e86b4; border-radius: 3px; background: #f6f7f7; color: #4f7fb5; font-size: 12px; white-space: nowrap; }
.btn--unlock { border-color: #04700a; background: #028f02; color: #fff; font-weight: 600; }
.btn--hover { background: #efeff0; border-color: #4a5f7a; color: #46627f; }
.cursor { position: absolute; left: 21px; top: 13px; width: 14px; height: 18px; }
.more { display: flex; align-items: center; gap: 2px; color: #4f7fb5; white-space: nowrap; }
.more span { text-decoration: underline; text-underline-offset: 2px; }
.more__ic { width: 14px; height: 14px; }

/* Floating brand mark */
.brand { position: fixed; right: 44px; bottom: 40px; width: 100px; height: 100px; display: flex; align-items: center; justify-content: center; border-radius: 50%; border: 1px solid #c4c4c4; background: #fcfcfc; box-shadow: inset 0 0 10px #e6e6e6; }
```
